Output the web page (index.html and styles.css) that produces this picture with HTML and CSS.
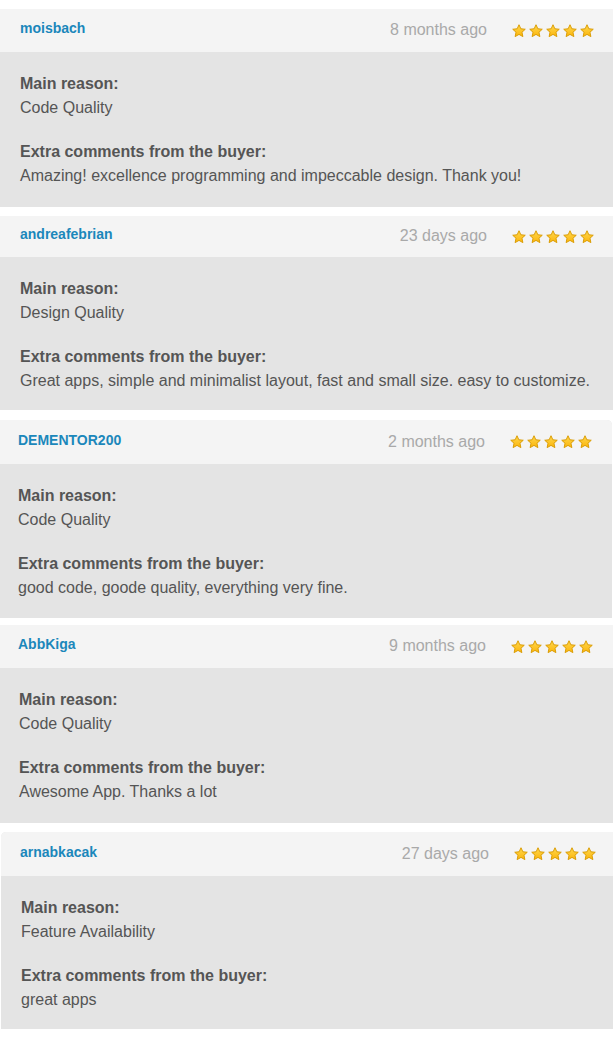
FILE: index.html
```html
<!DOCTYPE html>
<html lang="en">
<head>
<meta charset="utf-8">
<title>Reviews</title>
<link rel="stylesheet" href="styles.css">
</head>
<body>
<svg width="0" height="0" class="defs" aria-hidden="true">
  <defs>
    <linearGradient id="sg" x1="0" y1="0" x2="0" y2="1">
      <stop offset="0" stop-color="#ffd84e"/>
      <stop offset="1" stop-color="#fbb50c"/>
    </linearGradient>
    <symbol id="star" viewBox="0.4 0.3 13.2 13">
      <path d="M7 0.9 L8.75 4.7 L12.9 5.15 L9.8 7.95 L10.65 12.1 L7 10 L3.35 12.1 L4.2 7.95 L1.1 5.15 L5.25 4.7 Z" fill="url(#sg)" stroke="#d99a00" stroke-width="0.9" stroke-linejoin="round"/>
    </symbol>
  </defs>
</svg>

<div class="list">
  <section class="review r1">
    <header class="review-head">
      <span class="user">moisbach</span>
      <span class="date">8 months ago</span>
      <span class="stars"><svg><use href="#star"/></svg><svg><use href="#star"/></svg><svg><use href="#star"/></svg><svg><use href="#star"/></svg><svg><use href="#star"/></svg></span>
    </header>
    <div class="review-body">
      <p class="block"><b>Main reason:</b><br>Code Quality</p>
      <p class="block"><b>Extra comments from the buyer:</b><br>Amazing! excellence programming and impeccable design. Thank you!</p>
    </div>
  </section>

  <section class="review r2">
    <header class="review-head">
      <span class="user">andreafebrian</span>
      <span class="date">23 days ago</span>
      <span class="stars"><svg><use href="#star"/></svg><svg><use href="#star"/></svg><svg><use href="#star"/></svg><svg><use href="#star"/></svg><svg><use href="#star"/></svg></span>
    </header>
    <div class="review-body">
      <p class="block"><b>Main reason:</b><br>Design Quality</p>
      <p class="block"><b>Extra comments from the buyer:</b><br>Great apps, simple and minimalist layout, fast and small size. easy to customize.</p>
    </div>
  </section>

  <section class="review r3">
    <header class="review-head">
      <span class="user">DEMENTOR200</span>
      <span class="date">2 months ago</span>
      <span class="stars"><svg><use href="#star"/></svg><svg><use href="#star"/></svg><svg><use href="#star"/></svg><svg><use href="#star"/></svg><svg><use href="#star"/></svg></span>
    </header>
    <div class="review-body">
      <p class="block"><b>Main reason:</b><br>Code Quality</p>
      <p class="block"><b>Extra comments from the buyer:</b><br>good code, goode quality, everything very fine.</p>
    </div>
  </section>

  <section class="review r4">
    <header class="review-head">
      <span class="user">AbbKiga</span>
      <span class="date">9 months ago</span>
      <span class="stars"><svg><use href="#star"/></svg><svg><use href="#star"/></svg><svg><use href="#star"/></svg><svg><use href="#star"/></svg><svg><use href="#star"/></svg></span>
    </header>
    <div class="review-body">
      <p class="block"><b>Main reason:</b><br>Code Quality</p>
      <p class="block"><b>Extra comments from the buyer:</b><br>Awesome App. Thanks a lot</p>
    </div>
  </section>

  <section class="review r5">
    <header class="review-head">
      <span class="user">arnabkacak</span>
      <span class="date">27 days ago</span>
      <span class="stars"><svg><use href="#star"/></svg><svg><use href="#star"/></svg><svg><use href="#star"/></svg><svg><use href="#star"/></svg><svg><use href="#star"/></svg></span>
    </header>
    <div class="review-body">
      <p class="block"><b>Main reason:</b><br>Feature Availability</p>
      <p class="block"><b>Extra comments from the buyer:</b><br>great apps</p>
    </div>
  </section>
</div>
</body>
</html>
```

FILE: styles.css
```css
html, body {
  margin: 0;
  padding: 0;
  background: #ffffff;
}

body {
  font-family: "Liberation Sans", Arial, sans-serif;
  color: #555555;
  overflow: hidden;
}

.defs {
  position: absolute;
  width: 0;
  height: 0;
}

.list {
  display: flex;
  flex-direction: column;
  padding-top: 9px;
  width: 613px;
}

.review {
  background: #e4e4e4;
  width: 613px;
}

.review-head {
  background: #f4f4f4;
  height: 43px;
  display: flex;
  align-items: center;
  padding: 0 19px 0 20px;
  box-sizing: border-box;
}

.user {
  font-weight: bold;
  font-size: 14px;
  color: #1b87bb;
  flex: 1;
  margin-bottom: 5px;
}

.date {
  font-size: 16px;
  color: #a9a9a9;
  margin-right: 25px;
  margin-bottom: 1px;
}

.stars {
  display: flex;
  gap: 3px;
}

.stars svg {
  width: 14px;
  height: 14px;
  display: block;
}

.review-body {
  padding: 20px 20px 19px;
  font-size: 16px;
  line-height: 24px;
}

.block {
  margin: 0;
}

.block + .block {
  margin-top: 20px;
}

.block b {
  color: #555555;
}

/* per-card variations */
.r2 {
  margin-top: 9px;
}
.r2 .review-head {
  height: 41px;
}
.r2 .review-body {
  padding-bottom: 17px;
}

.r3 {
  margin-top: 10px;
  margin-left: -1px;
  width: 613px;
  border-top-right-radius: 5px;
}
.r3 .review-head {
  height: 44px;
  padding-left: 19px;
  padding-right: 20px;
  border-top-right-radius: 5px;
}
.r3 .review-body {
  padding-left: 19px;
  padding-bottom: 18px;
}

.r4 {
  margin-top: 7px;
}
.r4 .review-head {
  padding-left: 18px;
  padding-right: 20px;
}
.r4 .review-body {
  padding-left: 19px;
}

.r5 {
  margin-top: 9px;
  margin-left: 1px;
  width: 612px;
  border-top-left-radius: 5px;
}
.r5 .review-head {
  height: 44px;
  border-top-left-radius: 5px;
  padding-left: 19px;
  padding-right: 17px;
}
.r5 .review-body {
  padding-bottom: 17px;
}
```
